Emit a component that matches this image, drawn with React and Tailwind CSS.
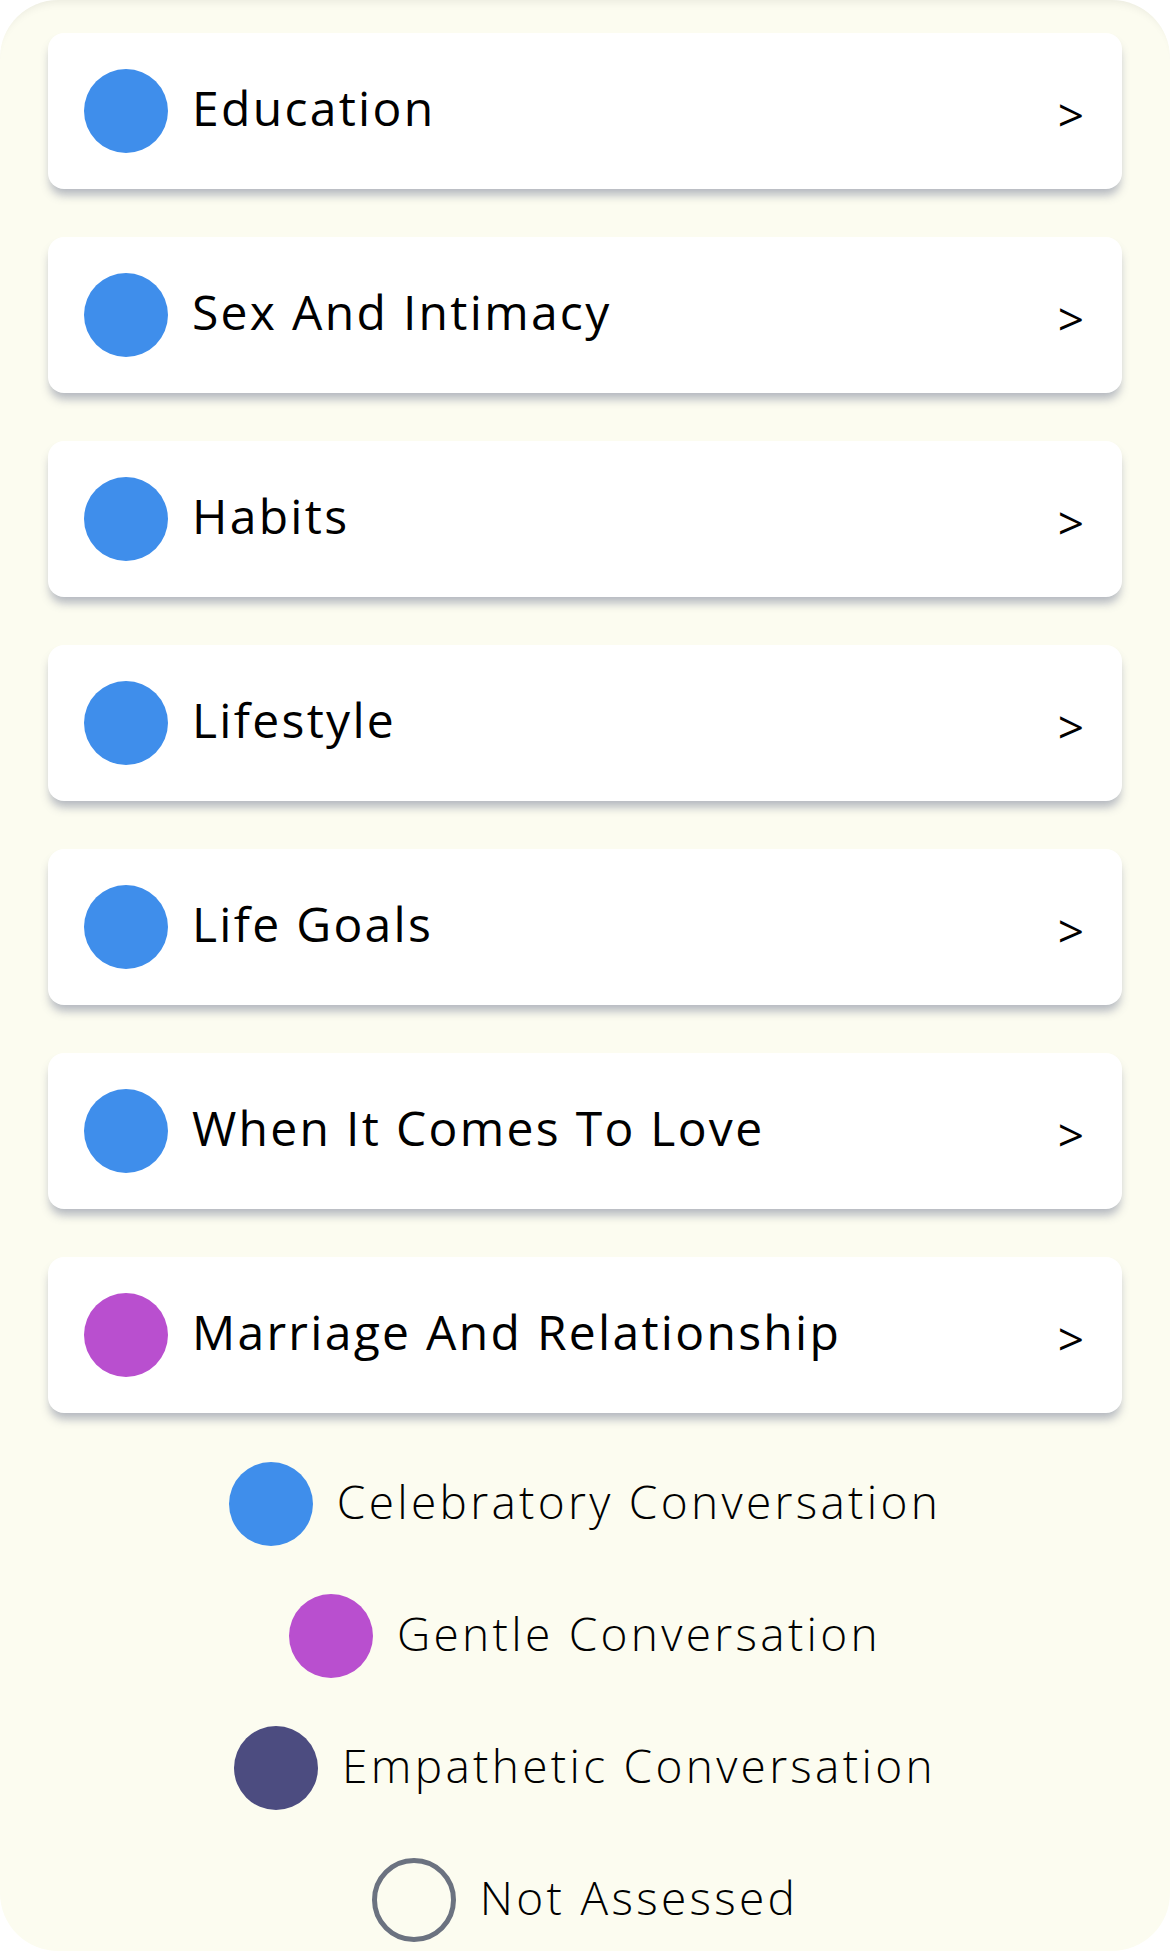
const topics = [
  { name: "Education", color: "bg-[#3f8eeb]" },
  { name: "Sex And Intimacy", color: "bg-[#3f8eeb]" },
  { name: "Habits", color: "bg-[#3f8eeb]" },
  { name: "Lifestyle", color: "bg-[#3f8eeb]" },
  { name: "Life Goals", color: "bg-[#3f8eeb]" },
  { name: "When It Comes To Love", color: "bg-[#3f8eeb]" },
  { name: "Marriage And Relationship", color: "bg-[#b94fcf]" },
];

const legend = [
  { label: "Celebratory Conversation", dot: "bg-[#3f8eeb]" },
  { label: "Gentle Conversation", dot: "bg-[#b94fcf]" },
  { label: "Empathetic Conversation", dot: "bg-[#4c4c80]" },
  { label: "Not Assessed", dot: "border-[5px] border-[#6b7280]" },
];

const TopicCard = ({ name, color }) => (
  <button className="flex items-center h-[156px] w-full bg-white rounded-2xl pl-[36px] pr-[38px] shadow-[0_8px_10px_-2px_rgba(90,100,130,0.45)] text-left">
    <span className={`w-[84px] h-[84px] rounded-full shrink-0 ${color}`} />
    <span className="ml-[24px] flex-1 text-[48px] text-black leading-none tracking-[2.3px] pb-[6px]">
      {name}
    </span>
    <span className="text-[46px] text-black leading-none mt-[6px]">&gt;</span>
  </button>
);

export default function App() {
  return (
    <div
      className="w-[1170px] h-[1951px] bg-white"
      style={{ fontFamily: '"Open Sans", "Liberation Sans", sans-serif' }}
    >
      <div className="h-full bg-[#fcfcf0] rounded-[58px] shadow-[inset_0_10px_10px_-8px_rgba(0,0,0,0.08)] px-[48px] pt-[33px]">
        {/* Topic list */}
        <div className="flex flex-col gap-[48px]">
          {topics.map((t) => (
            <TopicCard key={t.name} {...t} />
          ))}
        </div>

        {/* Legend */}
        <div className="flex flex-col items-center gap-[48px] mt-[49px]">
          {legend.map((l) => (
            <div key={l.label} className="flex items-center">
              <span className={`w-[84px] h-[84px] rounded-full shrink-0 ${l.dot}`} />
              <span className="ml-[24px] text-[46px] font-light text-black leading-none tracking-[3.3px] pb-[6px]">
                {l.label}
              </span>
            </div>
          ))}
        </div>
      </div>
    </div>
  );
}
